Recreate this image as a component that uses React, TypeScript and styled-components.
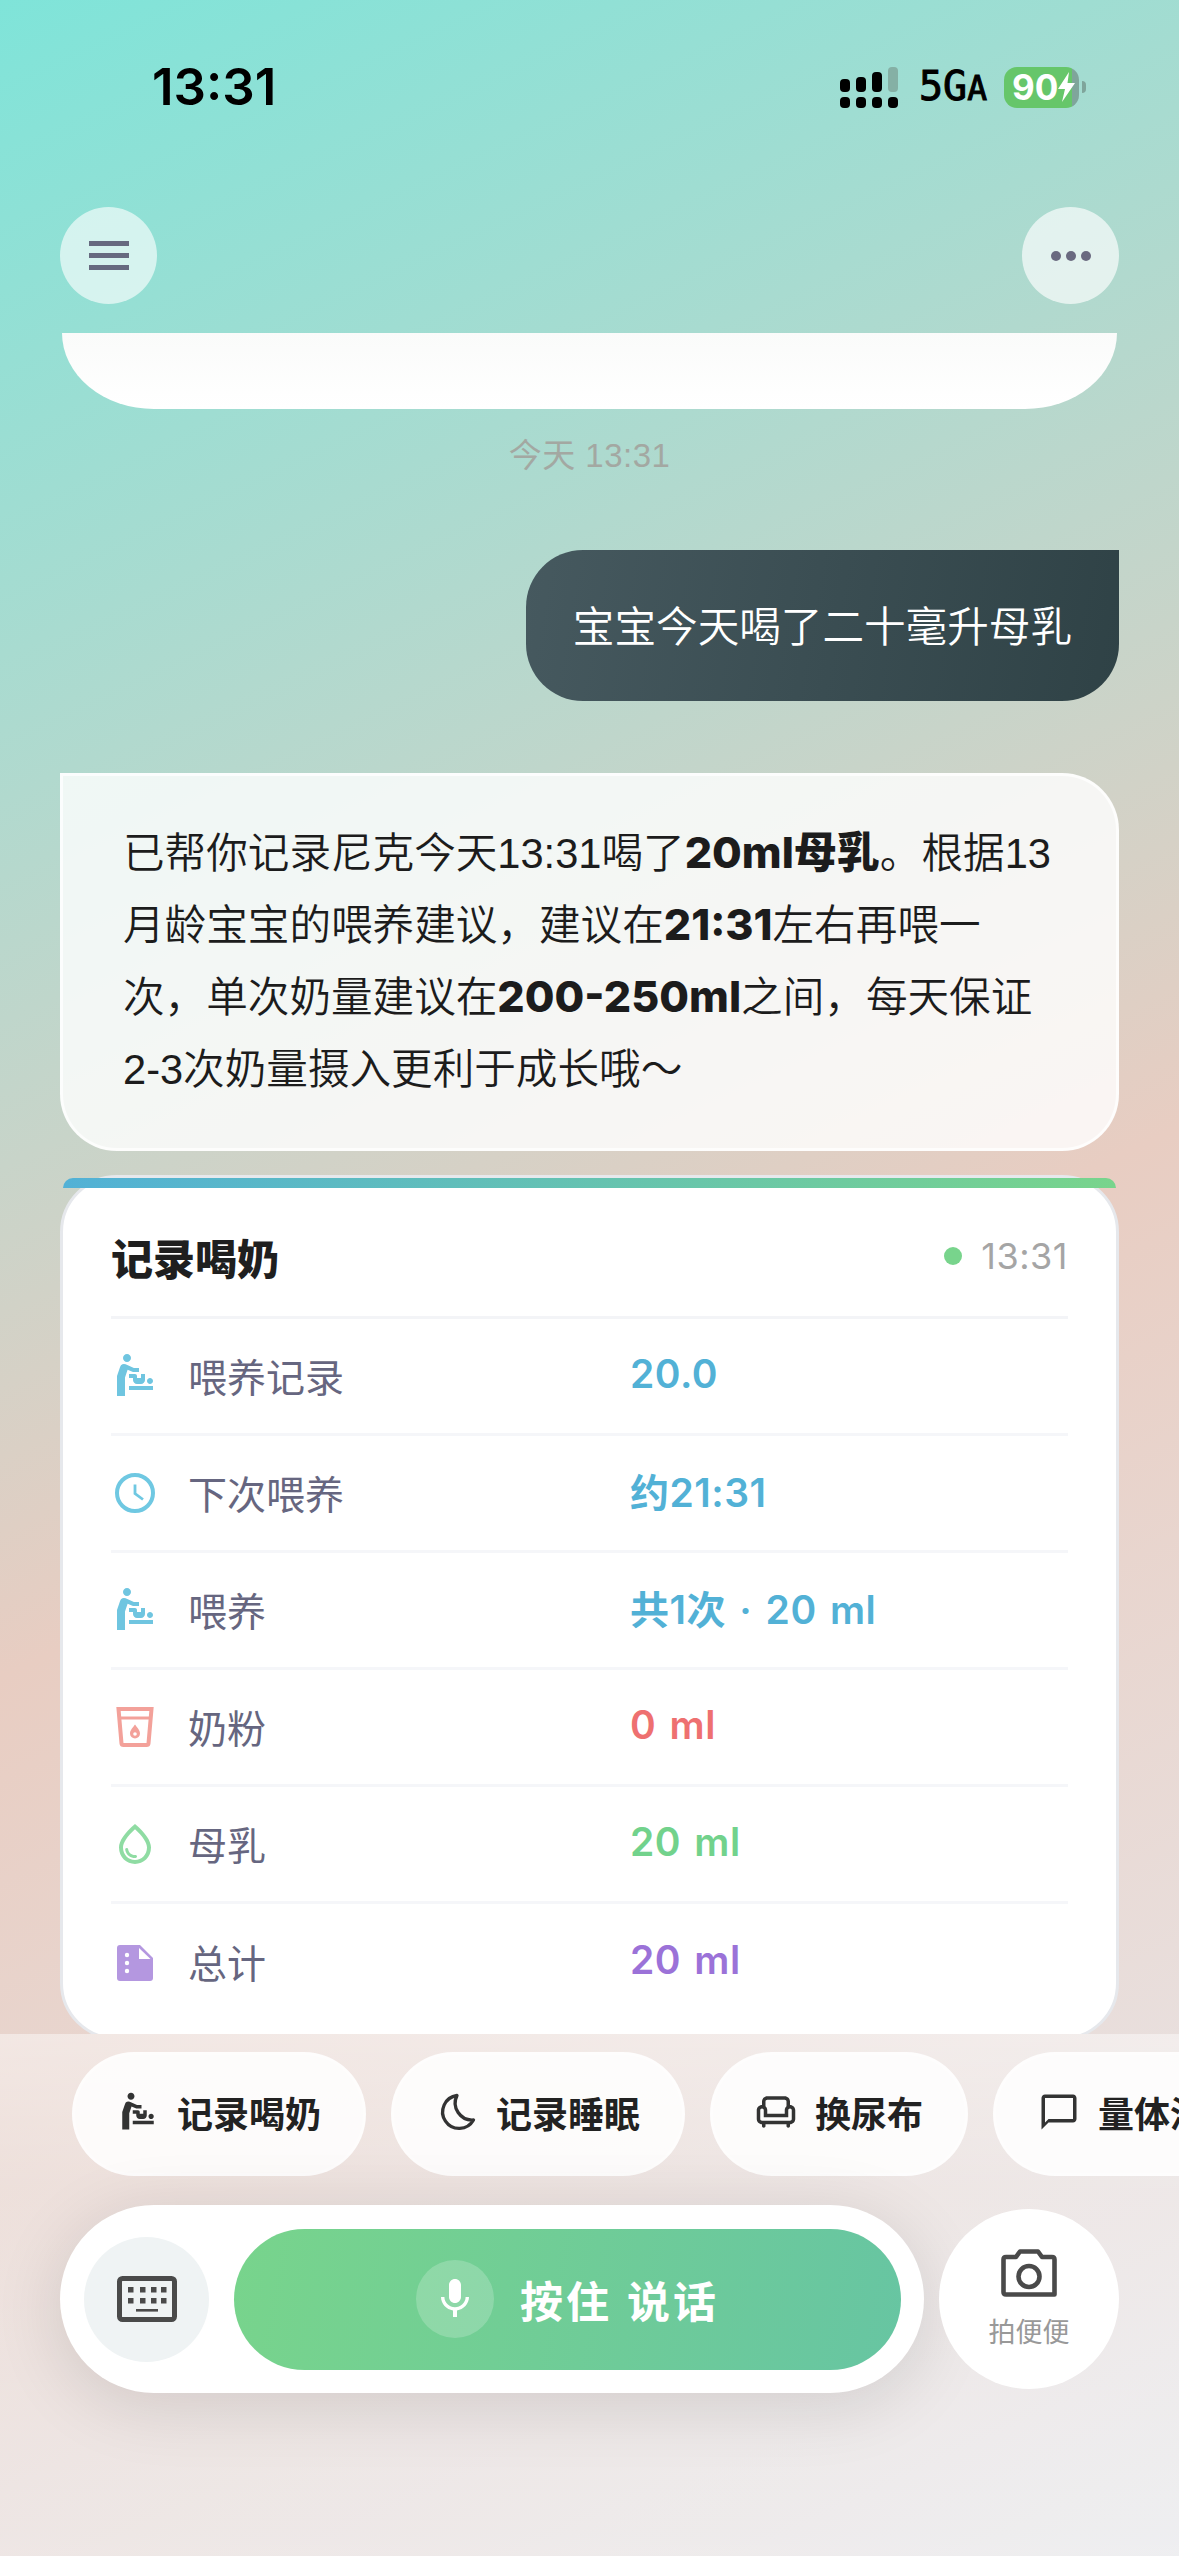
import styled, { createGlobalStyle } from "styled-components";
import { MdBabyChangingStation, MdMic, MdOutlineChair, MdOutlineChatBubbleOutline, MdOutlineWaterDrop } from "react-icons/md";
import type { ReactNode } from "react";

const ClockIcon = () => (
	<svg width="48" height="48" viewBox="0 0 48 48" fill="none" stroke="#6fc8e2">
		<circle cx="24" cy="24" r="18" strokeWidth="4" />
		<path d="M24 15.5V24.5L32 30.5" strokeWidth="2.8" />
	</svg>
);

const CupIcon = () => (
	<svg width="48" height="48" viewBox="0 0 48 48" fill="none">
		<path d="M7.5 6H40.5L37.5 40.5Q37.3 42 35.5 42H12.5Q10.7 42 10.5 40.5Z" stroke="#f3a19a" strokeWidth="4" />
		<path d="M8 15H40" stroke="#f3a19a" strokeWidth="3" />
		<path d="M24 21.5C26 24.5 29 27 29 30.5A5 5 0 0 1 19 30.5C19 27 22 24.5 24 21.5Z" fill="#f3a19a" />
		<circle cx="24" cy="31" r="1.8" fill="#fff" />
	</svg>
);

const DocIcon = () => (
	<svg width="48" height="48" viewBox="-6 -6 48 48">
		<path d="M3 0H23L36 13V33A3 3 0 0 1 33 36H3A3 3 0 0 1 0 33V3A3 3 0 0 1 3 0Z" fill="#b497e0" />
		<path d="M22 3V14H33.5Z" fill="#fff" />
		<circle cx="10" cy="10" r="2.2" fill="#fff" />
		<circle cx="10" cy="18" r="2.2" fill="#fff" />
		<circle cx="10" cy="26" r="2.2" fill="#fff" />
	</svg>
);

const MoonIcon = () => (
	<svg width="42" height="42" viewBox="0 0 42 42" fill="none" stroke="#333" strokeWidth="3.3" strokeLinejoin="round">
		<path d="M21 4.5A16.5 16.5 0 1 0 37.5 29A17 17 0 0 1 21 4.5Z" />
	</svg>
);

const KeyboardIcon = () => (
	<svg width="60" height="46" viewBox="0 0 60 46" fill="none">
		<rect x="2.5" y="2.5" width="55" height="41" rx="3" stroke="#4a4a4a" strokeWidth="5" />
		{[11, 23, 34, 44].map((x) => (
			<g key={x} fill="#4a4a4a">
				<rect x={x} y="11" width="5.5" height="5.5" />
				<rect x={x} y="22" width="5.5" height="5.5" />
			</g>
		))}
		<rect x="19" y="33" width="22" height="2.6" fill="#4a4a4a" />
	</svg>
);

const CameraIcon = () => (
	<svg width="56" height="48" viewBox="0 0 56 48" fill="none" stroke="#4a4a4a" strokeWidth="4.6" strokeLinejoin="round">
		<path d="M2.5 10.5Q2.5 8 5 8H15L19 2.5H37L41 8H51Q53.5 8 53.5 10.5V45.5H5Q2.5 45.5 2.5 43Z" />
		<circle cx="28" cy="27.5" r="10.5" />
	</svg>
);

const SignalIcon = () => (
	<svg width="58" height="41" viewBox="0 0 58 41" fill="#000">
		<rect x="0" y="12" width="10" height="13" rx="4" />
		<rect x="16" y="10" width="10" height="15" rx="4" />
		<rect x="32" y="5" width="10" height="20" rx="4" />
		<rect x="48" y="0" width="10" height="25" rx="4" fill="#85b0a5" />
		{[0, 16, 32, 48].map((x) => (
			<rect key={x} x={x} y="30" width="10" height="11" rx="4" />
		))}
	</svg>
);

const BoltIcon = () => (
	<svg width="17" height="30" viewBox="0 0 17 30" fill="#fff">
		<path d="M11 0L0 17H7L4 30L17 11H9.5Z" />
	</svg>
);

type Row = { icon: ReactNode; label: string; value: string; color: string };

const rows: Row[] = [
	{ icon: <MdBabyChangingStation size={48} color="#6fc5e0" />, label: "喂养记录", value: "20.0", color: "#52b1d6" },
	{ icon: <ClockIcon />, label: "下次喂养", value: "约21:31", color: "#52b1d6" },
	{ icon: <MdBabyChangingStation size={48} color="#6fc5e0" />, label: "喂养", value: "共1次 · 20 ml", color: "#52b1d6" },
	{ icon: <CupIcon />, label: "奶粉", value: "0 ml", color: "#ee7070" },
	{ icon: <MdOutlineWaterDrop size={48} color="#8fdca3" />, label: "母乳", value: "20 ml", color: "#72d28c" },
	{ icon: <DocIcon />, label: "总计", value: "20 ml", color: "#9b72d8" },
];

const chips: { icon: ReactNode; label: string }[] = [
	{ icon: <MdBabyChangingStation size={42} color="#333" />, label: "记录喝奶" },
	{ icon: <MoonIcon />, label: "记录睡眠" },
	{ icon: <MdOutlineChair size={42} color="#333" />, label: "换尿布" },
	{ icon: <MdOutlineChatBubbleOutline size={42} color="#333" />, label: "量体温" },
];

export default function App() {
	return (
		<Page>
			<GlobalStyle />
			<StatusBar>
				<Clock>13:31</Clock>
				<StatusIcons>
					<SignalIcon />
					<Network>
						5G<small>A</small>
					</Network>
					<BatteryWrap>
						<Battery>
							<BatteryText>90</BatteryText>
							<BoltIcon />
						</Battery>
						<BatteryNub />
					</BatteryWrap>
				</StatusIcons>
			</StatusBar>
			<NavBar>
				<RoundButton $alpha={0.62}>
					<MenuLines>
						<span />
						<span />
						<span />
					</MenuLines>
				</RoundButton>
				<RoundButton $alpha={0.66}>
					<MoreDots>
						<span />
						<span />
						<span />
					</MoreDots>
				</RoundButton>
			</NavBar>
			<Chat>
				<ClippedBubble />
				<TimeStamp>今天 13:31</TimeStamp>
				<UserBubble>宝宝今天喝了二十毫升母乳</UserBubble>
				<AiBubble>
					已帮你记录尼克今天13:31喝了<b>20ml母乳</b>。根据13
					<br />
					月龄宝宝的喂养建议，建议在<b>21:31</b>左右再喂一
					<br />
					次，单次奶量建议在<b>200-250ml</b>之间，每天保证
					<br />
					2-3次奶量摄入更利于成长哦～
				</AiBubble>
				<RecordCard>
					<AccentStrip />
					<CardHeader>
						<CardTitle>记录喝奶</CardTitle>
						<CardTime>
							<GreenDot />
							13:31
						</CardTime>
					</CardHeader>
					{rows.map((row, i) => (
						<RecordRow key={i} $last={i === rows.length - 1}>
							<RowIcon>{row.icon}</RowIcon>
							<RowLabel>{row.label}</RowLabel>
							<RowValue $color={row.color}>{row.value}</RowValue>
						</RecordRow>
					))}
				</RecordCard>
			</Chat>
			<BottomPanel>
				<ChipRow>
					{chips.map((chip) => (
						<Chip key={chip.label}>
							{chip.icon}
							{chip.label}
						</Chip>
					))}
				</ChipRow>
				<InputRow>
					<InputBar>
						<KeyboardButton>
							<KeyboardIcon />
						</KeyboardButton>
						<TalkButton>
							<MicCircle>
								<MdMic size={48} color="#fff" />
							</MicCircle>
							<TalkText>按住 说话</TalkText>
						</TalkButton>
					</InputBar>
					<CameraButton>
						<CameraIcon />
						<CameraLabel>拍便便</CameraLabel>
					</CameraButton>
				</InputRow>
			</BottomPanel>
		</Page>
	);
}

const GlobalStyle = createGlobalStyle`
	html, body {
		margin: 0;
		padding: 0;
	}
	body {
		font-family: "Liberation Sans", "Noto Sans CJK SC", sans-serif;
	}
`;

const Page = styled.div`
	width: 1179px;
	height: 2556px;
	overflow: hidden;
	display: flex;
	flex-direction: column;
	background: linear-gradient(155deg, #7fe4d9 0%, #e8cdc2 54%, #e9e9ec 100%);
`;

const StatusBar = styled.div`
	height: 207px;
	box-sizing: border-box;
	padding: 66px 93px 0 152px;
	display: flex;
	justify-content: space-between;
	align-items: flex-start;
	flex: none;
`;

const Clock = styled.div`
	font-family: Inter, sans-serif;
	font-size: 51px;
	font-weight: 600;
	line-height: 42px;
	color: #000;
`;

const StatusIcons = styled.div`
	display: flex;
	align-items: center;
	height: 42px;
`;

const Network = styled.div`
	font-family: "DejaVu Sans Mono", monospace;
	font-size: 40px;
	line-height: 42px;
	-webkit-text-stroke: 1px #000;
	margin: 0 17px 0 21px;
	color: #000;
	small {
		font-size: 33px;
	}
`;

const BatteryWrap = styled.div`
	display: flex;
	align-items: center;
	gap: 3px;
`;

const Battery = styled.div`
	width: 75px;
	height: 41px;
	box-sizing: border-box;
	padding-left: 8px;
	border-radius: 13px;
	display: flex;
	align-items: center;
	background: linear-gradient(90deg, #66c66a 91%, #7fa59b 91%);
`;

const BatteryText = styled.span`
	font-family: Inter, sans-serif;
	font-size: 35px;
	font-weight: 700;
	color: #fff;
	line-height: 41px;
`;

const BatteryNub = styled.div`
	width: 4px;
	height: 12px;
	background: #7fa59b;
	border-radius: 0 6px 6px 0;
`;

const NavBar = styled.div`
	height: 97px;
	margin-bottom: 29px;
	padding: 0 60px;
	display: flex;
	justify-content: space-between;
	flex: none;
`;

const RoundButton = styled.div<{ $alpha: number }>`
	width: 97px;
	height: 97px;
	border-radius: 50%;
	background: rgba(255, 255, 255, ${(p) => p.$alpha});
	display: flex;
	align-items: center;
	justify-content: center;
`;

const MenuLines = styled.div`
	display: flex;
	flex-direction: column;
	gap: 7px;
	span {
		display: block;
		width: 40px;
		height: 5px;
		background: #666a80;
	}
`;

const MoreDots = styled.div`
	display: flex;
	gap: 5px;
	span {
		display: block;
		width: 10px;
		height: 10px;
		border-radius: 50%;
		background: #6a6a80;
	}
`;

const Chat = styled.div`
	flex: 1;
	min-height: 0;
	overflow: hidden;
	padding: 0 60px;
	display: flex;
	flex-direction: column;
`;

const ClippedBubble = styled.div`
	height: 76px;
	flex: none;
	margin: 0 2px;
	background: linear-gradient(180deg, #fafbfa, #ffffff);
	border-radius: 0 0 92px 92px / 0 0 76px 76px;
`;

const TimeStamp = styled.div`
	margin-top: 27px;
	height: 40px;
	line-height: 40px;
	text-align: center;
	font-size: 33px;
	letter-spacing: 0.5px;
	color: #a3a8a2;
	flex: none;
`;

const UserBubble = styled.div`
	align-self: flex-end;
	margin-top: 74px;
	padding: 42px 47px 37px;
	font-size: 41.6px;
	font-weight: 350;
	line-height: 72px;
	color: #fff;
	border-radius: 57px 0 57px 57px;
	background: linear-gradient(100deg, #46595f, #2f4246);
	flex: none;
`;

const AiBubble = styled.div`
	margin-top: 72px;
	padding: 42px 60px;
	font-size: 41.6px;
	font-weight: 350;
	line-height: 72px;
	color: #1c1c1c;
	white-space: nowrap;
	background: rgba(255, 255, 255, 0.8);
	border: 3px solid rgba(255, 255, 255, 0.75);
	border-radius: 0 57px 57px 57px;
	flex: none;
	b {
		font-family: Inter, "Noto Sans CJK SC", sans-serif;
		font-size: 43px;
		font-weight: 800;
		line-height: 0;
	}
`;

const RecordCard = styled.div`
	position: relative;
	margin-top: 24px;
	padding: 0 48px 16px;
	background: #fff;
	border: 3px solid #e6e8ec;
	border-radius: 57px;
	flex: none;
`;

const AccentStrip = styled.div`
	position: absolute;
	top: 0;
	left: 0;
	right: 0;
	height: 10px;
	border-radius: 15px 15px 0 0;
	background: linear-gradient(90deg, #52b1d6, #78d48c);
`;

const CardHeader = styled.div`
	height: 141px;
	box-sizing: border-box;
	border-bottom: 3px solid #f3f4f7;
	padding-top: 18px;
	display: flex;
	align-items: center;
	justify-content: space-between;
`;

const CardTitle = styled.div`
	font-size: 42px;
	font-weight: 900;
	color: #1f1f1f;
`;

const CardTime = styled.div`
	display: flex;
	align-items: center;
	gap: 19px;
	font-family: Inter, sans-serif;
	font-size: 36px;
	letter-spacing: 0.5px;
	color: #a5a5a5;
`;

const GreenDot = styled.span`
	width: 18px;
	height: 18px;
	border-radius: 50%;
	background: #78d48c;
`;

const RecordRow = styled.div<{ $last: boolean }>`
	height: 117px;
	box-sizing: border-box;
	display: flex;
	align-items: center;
	border-bottom: ${(p) => (p.$last ? "none" : "3px solid #f5f6f9")};
`;

const RowIcon = styled.div`
	width: 48px;
	height: 48px;
	display: flex;
	flex: none;
`;

const RowLabel = styled.div`
	margin-left: 29px;
	width: 442px;
	padding-bottom: 3px;
	font-size: 39px;
	color: #666680;
`;

const RowValue = styled.div<{ $color: string }>`
	font-family: Inter, "Noto Sans CJK SC", sans-serif;
	font-size: 39px;
	font-weight: 600;
	letter-spacing: 0.5px;
	word-spacing: 3px;
	padding-bottom: 6px;
	color: ${(p) => p.$color};
`;

const BottomPanel = styled.div`
	height: 522px;
	flex: none;
	box-sizing: border-box;
	padding-top: 18px;
	background: linear-gradient(180deg, rgba(255, 255, 255, 0.45), rgba(255, 255, 255, 0.22) 30%, rgba(255, 255, 255, 0.25));
`;

const ChipRow = styled.div`
	display: flex;
	gap: 25px;
	padding-left: 72px;
	overflow: hidden;
	height: 124px;
`;

const Chip = styled.div`
	height: 124px;
	box-sizing: border-box;
	padding: 0 42px 4px;
	flex: none;
	display: flex;
	align-items: center;
	gap: 18px;
	font-size: 36px;
	font-weight: 600;
	color: #222;
	border-radius: 62px;
	background: rgba(255, 255, 255, 0.85);
	border: 3px solid rgba(255, 255, 255, 0.3);
`;

const InputRow = styled.div`
	margin-top: 29px;
	padding: 0 60px;
	display: flex;
	align-items: center;
	gap: 15px;
`;

const InputBar = styled.div`
	width: 864px;
	height: 188px;
	box-sizing: border-box;
	padding: 0 23px 0 24px;
	border-radius: 94px;
	background: #fff;
	box-shadow: 0 12px 70px rgba(0, 0, 0, 0.12);
	display: flex;
	align-items: center;
	gap: 25px;
`;

const KeyboardButton = styled.div`
	width: 125px;
	height: 125px;
	border-radius: 50%;
	background: #eff3f4;
	display: flex;
	align-items: center;
	justify-content: center;
	flex: none;
`;

const TalkButton = styled.div`
	flex: 1;
	height: 141px;
	border-radius: 71px;
	background: linear-gradient(100deg, #78d48c, #67c5a2);
	display: flex;
	align-items: center;
	justify-content: center;
	gap: 26px;
`;

const MicCircle = styled.div`
	width: 78px;
	height: 78px;
	border-radius: 50%;
	background: rgba(255, 255, 255, 0.2);
	display: flex;
	align-items: center;
	justify-content: center;
`;

const TalkText = styled.div`
	font-size: 43px;
	font-weight: 600;
	letter-spacing: 3px;
	color: #fff;
`;

const CameraButton = styled.div`
	width: 180px;
	height: 180px;
	border-radius: 50%;
	background: #fff;
	display: flex;
	flex-direction: column;
	align-items: center;
	justify-content: center;
	gap: 20px;
	flex: none;
`;

const CameraLabel = styled.div`
	font-size: 27px;
	line-height: 32px;
	color: #999;
`;
